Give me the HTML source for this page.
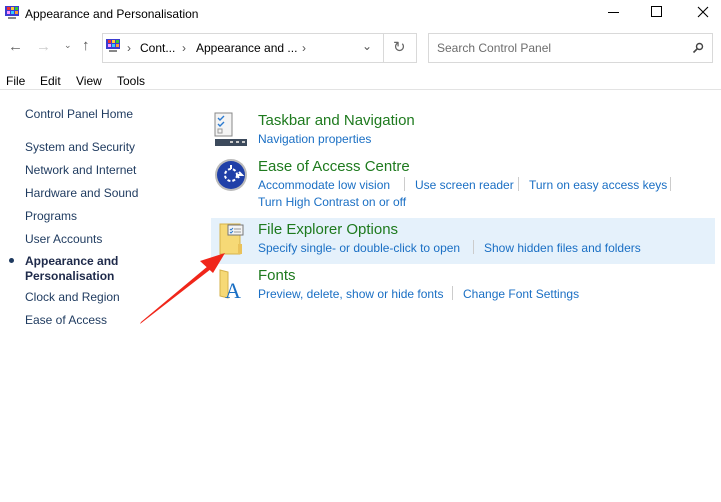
<!DOCTYPE html>
<html><head><meta charset="utf-8"><style>
*{margin:0;padding:0;box-sizing:border-box}
body{width:721px;height:502px;background:#fff;font-family:"Liberation Sans",sans-serif;position:relative;overflow:hidden;color:#000}
.a{position:absolute;white-space:nowrap}
.nav{font-size:12px;color:#1e3a5f}
.h{font-size:15px;color:#1e7a1e}
.l{font-size:12px;color:#1a6fc4}
.sep{position:absolute;width:1px;height:14px;background:#ccc}
</style></head><body>
<svg class="a" style="left:4px;top:5px" width="16" height="16" viewBox="0 0 16 16"><rect x="1" y="1" width="14" height="10" fill="#3c3cd0"/><rect x="3" y="2" width="3" height="3" fill="#e33"/><rect x="7" y="2" width="3" height="3" fill="#fc3"/><rect x="11" y="2" width="3" height="3" fill="#3c3"/><rect x="3" y="6" width="3" height="3" fill="#f9f"/><rect x="7" y="6" width="3" height="3" fill="#3cf"/><rect x="11" y="6" width="3" height="3" fill="#f93"/><rect x="4" y="12" width="8" height="2" fill="#888"/></svg>
<div class="a" style="left:25px;top:7px;font-size:12px">Appearance and Personalisation</div>
<div class="a" style="left:608px;top:12px;width:11px;height:1px;background:#000"></div>
<div class="a" style="left:651px;top:6px;width:11px;height:11px;border:1px solid #000"></div>
<svg class="a" style="left:697px;top:6px" width="12" height="12"><path d="M1 1L11 11M11 1L1 11" stroke="#000" stroke-width="1.1"/></svg>
<div class="a" style="left:8px;top:38px;font-size:15px;color:#666">←</div>
<div class="a" style="left:36px;top:38px;font-size:15px;color:#ccc">→</div>
<div class="a" style="left:64px;top:40px;font-size:9px;color:#666">⌄</div>
<div class="a" style="left:82px;top:37px;font-size:15px;color:#555">↑</div>
<div class="a" style="left:102px;top:33px;width:282px;height:30px;border:1px solid #d9d9d9"></div>
<div class="a" style="left:383px;top:33px;width:34px;height:30px;border:1px solid #d9d9d9"></div>
<svg class="a" style="left:105px;top:38px" width="16" height="16" viewBox="0 0 16 16"><rect x="1" y="1" width="14" height="10" fill="#3c3cd0"/><rect x="3" y="2" width="3" height="3" fill="#e33"/><rect x="7" y="2" width="3" height="3" fill="#fc3"/><rect x="11" y="2" width="3" height="3" fill="#3c3"/><rect x="3" y="6" width="3" height="3" fill="#f9f"/><rect x="7" y="6" width="3" height="3" fill="#3cf"/><rect x="11" y="6" width="3" height="3" fill="#f93"/><rect x="4" y="12" width="8" height="2" fill="#888"/></svg>
<div class="a" style="left:127px;top:41px;font-size:12px;color:#555">›</div>
<div class="a" style="left:140px;top:41px;font-size:12px">Cont...</div>
<div class="a" style="left:182px;top:41px;font-size:12px;color:#555">›</div>
<div class="a" style="left:196px;top:41px;font-size:12px">Appearance and ...</div>
<div class="a" style="left:302px;top:41px;font-size:12px;color:#555">›</div>
<div class="a" style="left:362px;top:39px;font-size:12px;color:#555">⌄</div>
<div class="a" style="left:393px;top:38px;font-size:15px;color:#666">↻</div>
<div class="a" style="left:428px;top:33px;width:285px;height:30px;border:1px solid #d9d9d9"></div>
<div class="a" style="left:437px;top:41px;font-size:12px;color:#6d6d6d">Search Control Panel</div>
<svg class="a" style="left:692px;top:42px" width="12" height="12" viewBox="0 0 12 12"><circle cx="7.5" cy="4.5" r="3" fill="none" stroke="#444" stroke-width="1.4"/><line x1="5.3" y1="6.7" x2="1.5" y2="10.5" stroke="#444" stroke-width="1.6"/></svg>
<div class="a" style="left:6px;top:74px;font-size:12px">File</div>
<div class="a" style="left:40px;top:74px;font-size:12px">Edit</div>
<div class="a" style="left:76px;top:74px;font-size:12px">View</div>
<div class="a" style="left:117px;top:74px;font-size:12px">Tools</div>
<div class="a" style="left:0;top:89px;width:721px;height:1px;background:#e3e3e3"></div>
<div class="a nav" style="left:25px;top:107px">Control Panel Home</div>
<div class="a nav" style="left:25px;top:140px">System and Security</div>
<div class="a nav" style="left:25px;top:163px">Network and Internet</div>
<div class="a nav" style="left:25px;top:186px">Hardware and Sound</div>
<div class="a nav" style="left:25px;top:209px">Programs</div>
<div class="a nav" style="left:25px;top:232px">User Accounts</div>
<div class="a" style="left:9px;top:258px;width:5px;height:5px;border-radius:50%;background:#1e3a5f"></div>
<div class="a nav" style="left:25px;top:254px;font-weight:bold;line-height:15px;color:#1e2a4a">Appearance and<br>Personalisation</div>
<div class="a nav" style="left:25px;top:290px">Clock and Region</div>
<div class="a nav" style="left:25px;top:313px">Ease of Access</div>
<div class="a" style="left:211px;top:218px;width:504px;height:46px;background:#e5f1fb"></div>
<svg class="a" style="left:214px;top:112px" width="34" height="34" viewBox="0 0 34 34"><rect x="1" y="1" width="17" height="23" fill="#f4f4f4" stroke="#888"/><path d="M4 6l2 2 4-4M4 12l2 2 4-4" stroke="#2a7ad0" fill="none" stroke-width="1.4"/><rect x="4" y="17" width="4" height="4" fill="none" stroke="#999"/><rect x="1" y="27" width="32" height="7" fill="#3c4a5c"/><rect x="16" y="29" width="3" height="2" fill="#ccc"/><rect x="22" y="29" width="3" height="2" fill="#ccc"/><rect x="28" y="29" width="3" height="2" fill="#ccc"/></svg>
<svg class="a" style="left:214px;top:158px" width="34" height="34" viewBox="0 0 34 34"><circle cx="17" cy="17" r="16" fill="#bbb"/><circle cx="17" cy="17" r="14" fill="#2040a8"/><circle cx="17" cy="17" r="6" fill="none" stroke="#fff" stroke-width="2" stroke-dasharray="3 2"/><path d="M17 11v-4M23 17h5l-3-3M23 17l2 3" stroke="#fff" stroke-width="2" fill="none"/></svg>
<svg class="a" style="left:218px;top:222px" width="30" height="34" viewBox="0 0 30 34"><path d="M2 2h20v30H2z" fill="#f6d976" stroke="#d6b24a"/><path d="M20 22v10h4V22z" fill="#eac25a"/><rect x="10" y="3" width="15" height="10" fill="#f4f4f4" stroke="#777"/><path d="M12 7l1 1 2-2M12 10l1 1 2-2" stroke="#2a7ad0" fill="none"/><line x1="16" y1="7" x2="23" y2="7" stroke="#999"/><line x1="16" y1="10" x2="23" y2="10" stroke="#999"/></svg>
<svg class="a" style="left:218px;top:268px" width="30" height="34" viewBox="0 0 30 34"><path d="M2 2l8 2v26l-8-2z" fill="#f6d976" stroke="#d6b24a"/><text x="7" y="30" font-family="Liberation Serif,serif" font-size="22" fill="#1a6fc4">A</text></svg>
<div class="a h" style="left:258px;top:112px">Taskbar and Navigation</div>
<div class="a l" style="left:258px;top:132px">Navigation properties</div>
<div class="a h" style="left:258px;top:158px">Ease of Access Centre</div>
<div class="a l" style="left:258px;top:178px">Accommodate low vision</div>
<div class="sep" style="left:404px;top:177px"></div>
<div class="a l" style="left:415px;top:178px">Use screen reader</div>
<div class="sep" style="left:518px;top:177px"></div>
<div class="a l" style="left:529px;top:178px">Turn on easy access keys</div>
<div class="sep" style="left:670px;top:177px"></div>
<div class="a l" style="left:258px;top:195px">Turn High Contrast on or off</div>
<div class="a h" style="left:258px;top:221px">File Explorer Options</div>
<div class="a l" style="left:258px;top:241px">Specify single- or double-click to open</div>
<div class="sep" style="left:473px;top:240px"></div>
<div class="a l" style="left:484px;top:241px">Show hidden files and folders</div>
<div class="a h" style="left:258px;top:267px">Fonts</div>
<div class="a l" style="left:258px;top:287px">Preview, delete, show or hide fonts</div>
<div class="sep" style="left:452px;top:286px"></div>
<div class="a l" style="left:463px;top:287px">Change Font Settings</div>
<svg class="a" style="left:0;top:0" width="721" height="502"><polygon points="140,324 141,322 208,266 211,269" fill="#f0261a"/><polygon points="225,253 200,261 213,273" fill="#f0261a"/></svg>
</body></html>
